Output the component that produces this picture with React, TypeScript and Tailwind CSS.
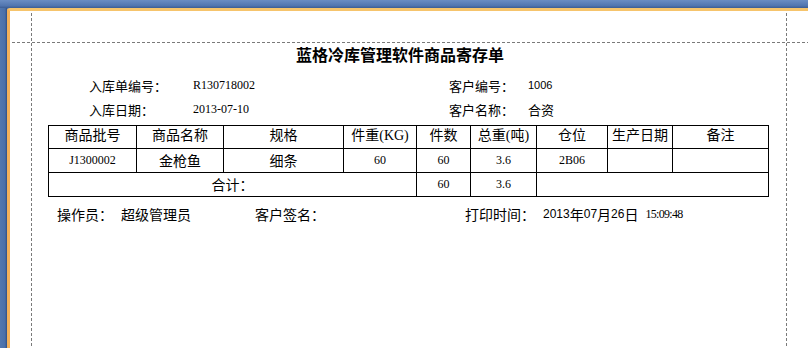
import React from "react";

const cjk = "font-['Noto_Sans_CJK_SC',sans-serif]";
const serif = "font-['Liberation_Serif','Noto_Sans_CJK_SC',serif]";
const sans = "font-['Liberation_Sans','Noto_Sans_CJK_SC',sans-serif]";

function HCell({ children }: { children?: React.ReactNode }) {
  return (
    <div className={`flex items-center justify-center border-b border-r border-black text-[14px] leading-none text-black ${serif} pb-[3px]`}>
      {children}
    </div>
  );
}

function DCell({ children, big }: { children?: React.ReactNode; big?: boolean }) {
  return (
    <div
      className={
        big
          ? `flex items-center justify-center border-b border-r border-black text-[14px] leading-none text-black ${cjk} pb-[2px]`
          : `flex items-center justify-center border-b border-r border-black text-[12px] leading-none text-black ${serif} pb-[1px]`
      }
    >
      {children}
    </div>
  );
}

export default function App() {
  return (
    <div className="flex h-[348px] w-[808px] flex-col overflow-hidden bg-[#4d72aa]">
      <div className="h-[8px] w-full bg-[linear-gradient(to_bottom,#6a8dc3,#5276b0_70%,#3c5d93)]" />
      <div className="flex flex-1">
        <div className="w-[7px] bg-[linear-gradient(to_right,#5177b0,#4a6fa8_70%,#2f4f85)]" />
        <div className="relative flex-1 rounded-tl-[3px] border-l-[3px] border-t-[3px] border-l-[#f2b05a] border-t-[#f6c46c] bg-white">
          {/* margin guides */}
          <div className="absolute left-[21px] top-[2px] bottom-0 w-px bg-[repeating-linear-gradient(to_bottom,#7a7a7a_0px,#7a7a7a_3px,transparent_3px,transparent_5px)]" />
          <div className="absolute left-[776px] top-[2px] bottom-0 w-px bg-[repeating-linear-gradient(to_bottom,#7a7a7a_0px,#7a7a7a_3px,transparent_3px,transparent_5px)]" />
          <div className="absolute left-[2px] right-0 top-[31px] h-px bg-[repeating-linear-gradient(to_right,#7a7a7a_0px,#7a7a7a_3px,transparent_3px,transparent_5px)]" />

          <div className="ml-[38px] flex w-[721px] flex-col pt-[33px] text-black">
            {/* title */}
            <div className={`h-[20px] pl-[248px] text-[16px] font-bold leading-[20px] ${cjk}`}>
              蓝格冷库管理软件商品寄存单
            </div>

            {/* info rows */}
            <div className="mt-[9px] flex flex-col">
              <div className="flex h-[24px] items-center">
                <div className={`ml-[41px] w-[104px] text-[13px] leading-none ${cjk}`}>入库单编号：</div>
                <div className={`w-[256px] text-[12px] leading-none ${serif}`}>R130718002</div>
                <div className={`w-[79px] text-[13px] leading-none ${cjk}`}>客户编号：</div>
                <div className={`text-[11px] leading-none ${sans}`}>1006</div>
              </div>
              <div className="flex h-[24px] items-center">
                <div className={`ml-[41px] w-[104px] text-[13px] leading-none ${cjk}`}>入库日期：</div>
                <div className={`w-[256px] text-[12px] leading-none ${serif}`}>2013-07-10</div>
                <div className={`w-[79px] text-[13px] leading-none ${cjk}`}>客户名称：</div>
                <div className={`text-[13px] leading-none ${cjk}`}>合资</div>
              </div>
            </div>

            {/* table */}
            <div className="mt-[4px] grid grid-cols-[88px_87px_120px_73px_54px_66px_71px_65px_96px] grid-rows-[23px_24px_24px] border-l border-t border-black">
              <HCell>商品批号</HCell>
              <HCell>商品名称</HCell>
              <HCell>规格</HCell>
              <HCell>件重(KG)</HCell>
              <HCell>件数</HCell>
              <HCell>总重(吨)</HCell>
              <HCell>仓位</HCell>
              <HCell>生产日期</HCell>
              <HCell>备注</HCell>

              <DCell>J1300002</DCell>
              <DCell big>金枪鱼</DCell>
              <DCell big>细条</DCell>
              <DCell>60</DCell>
              <DCell>60</DCell>
              <DCell>3.6</DCell>
              <DCell>2B06</DCell>
              <DCell />
              <DCell />

              <div className={`col-span-4 flex items-center justify-center border-b border-r border-black pb-[2px] text-[14px] leading-none ${cjk}`}>
                合计：
              </div>
              <DCell>60</DCell>
              <DCell>3.6</DCell>
              <div className="col-span-3 border-b border-r border-black" />
            </div>

            {/* footer */}
            <div className="mt-[7px] flex h-[20px] items-center">
              <div className={`ml-[9px] w-[64px] text-[14px] leading-none ${cjk}`}>操作员：</div>
              <div className={`w-[134px] text-[14px] leading-none ${cjk}`}>超级管理员</div>
              <div className={`w-[210px] text-[14px] leading-none ${cjk}`}>客户签名：</div>
              <div className={`w-[78px] text-[14px] leading-none ${cjk}`}>打印时间：</div>
              <div className="flex items-center">
                <span className={`text-[12px] leading-none ${sans}`}>2013</span>
                <span className={`text-[14px] leading-none ${cjk}`}>年</span>
                <span className={`text-[12px] leading-none ${sans}`}>07</span>
                <span className={`text-[14px] leading-none ${cjk}`}>月</span>
                <span className={`text-[12px] leading-none ${sans}`}>26</span>
                <span className={`text-[14px] leading-none ${cjk}`}>日</span>
                <span className={`ml-[7px] text-[12px] leading-none tracking-[-0.7px] ${serif}`}>15:09:48</span>
              </div>
            </div>
          </div>
        </div>
      </div>
    </div>
  );
}
